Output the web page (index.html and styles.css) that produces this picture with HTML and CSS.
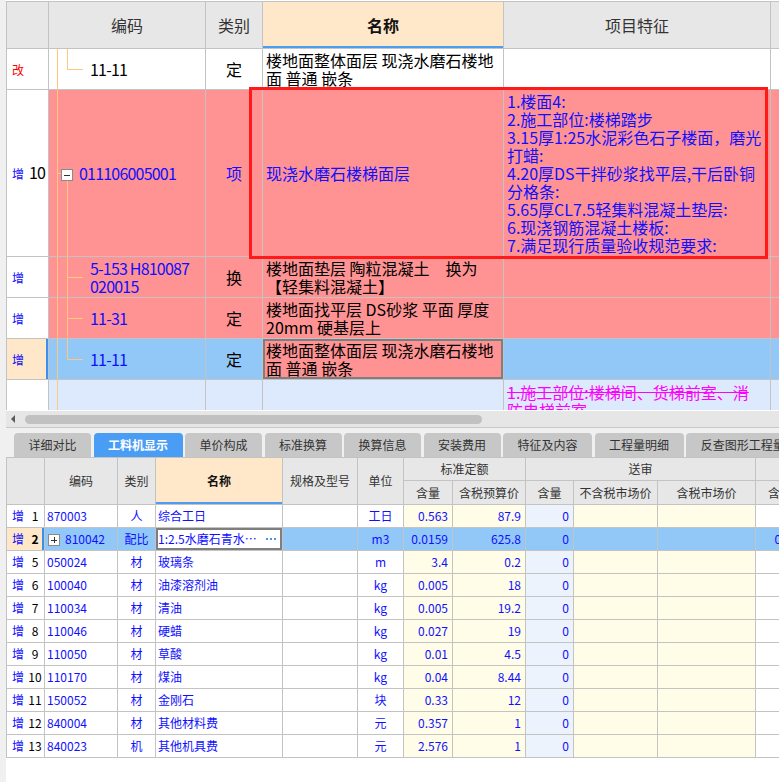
FILE: index.html
```html
<!DOCTYPE html>
<html lang="zh-CN">
<head>
<meta charset="utf-8">
<title>工料机显示</title>
<link rel="stylesheet" href="styles.css">
</head>
<body>
<div class="app">
  <div class="strip"></div>
  <div class="main">
    <div class="top">
      <table class="grid top-grid">
        <colgroup>
          <col class="w42"><col class="w157"><col class="w57"><col class="w241"><col class="w267"><col class="w60">
        </colgroup>
        <thead>
          <tr class="th47">
            <th></th><th>编码</th><th>类别</th><th class="hl">名称</th><th>项目特征</th><th></th>
          </tr>
        </thead>
        <tbody>
          <tr class="h41">
            <td class="rh"><span class="op mod">改</span></td>
            <td class="tree t-last tight">11-11</td>
            <td class="c">定</td>
            <td>楼地面整体面层 现浇水磨石楼地<br>面 普通 嵌条</td>
            <td></td><td></td>
          </tr>
          <tr class="h167 bad">
            <td class="rh"><span class="op">增</span><span class="num16">10</span></td>
            <td class="tree t-parent blue tight"><span class="tog"><svg width="12" height="12" viewBox="0 0 12 12"><rect x="0.5" y="0.5" width="11" height="11" fill="#fff" stroke="#8a8a8a"/><path d="M3 6.5h6" stroke="#333" stroke-width="1"/></svg></span>011106005001</td>
            <td class="c blue">项</td>
            <td class="blue">现浇水磨石楼梯面层</td>
            <td class="blue feat">1.楼面4:<br>2.施工部位:楼梯踏步<br>3.15厚1:25水泥彩色石子楼面，磨光<br>打蜡:<br>4.20厚DS干拌砂浆找平层,干后卧铜<br>分格条:<br>5.65厚CL7.5轻集料混凝土垫层:<br>6.现浇钢筋混凝土楼板:<br>7.满足现行质量验收规范要求:</td>
            <td></td>
          </tr>
          <tr class="h41 bad">
            <td class="rh"><span class="op">增</span></td>
            <td class="tree t-mid blue tight">5-153 H810087<br>020015</td>
            <td class="c">换</td>
            <td>楼地面垫层 陶粒混凝土　换为<br>【轻集料混凝土】</td>
            <td></td><td></td>
          </tr>
          <tr class="h41 bad">
            <td class="rh"><span class="op">增</span></td>
            <td class="tree t-mid blue tight">11-31</td>
            <td class="c">定</td>
            <td>楼地面找平层 DS砂浆 平面 厚度<br>20mm 硬基层上</td>
            <td></td><td></td>
          </tr>
          <tr class="h41 sel">
            <td class="rh cur"><span class="op">增</span></td>
            <td class="tree t-last blue tight">11-11</td>
            <td class="c">定</td>
            <td class="editing">楼地面整体面层 现浇水磨石楼地<br>面 普通 嵌条</td>
            <td></td><td></td>
          </tr>
          <tr class="h41 next">
            <td class="rh"></td>
            <td class="tree t-tail"></td>
            <td></td>
            <td></td>
            <td class="top-al strike">1.施工部位:楼梯间、货梯前室、消<br>防电梯前室</td>
            <td></td>
          </tr>
        </tbody>
      </table>
      <div class="focus"></div>
    </div>

    <div class="hscroll">
      <span class="arrow"></span>
      <span class="thumb"></span>
    </div>

    <div class="tabs">
      <div class="tab">详细对比</div>
      <div class="tab active">工料机显示</div>
      <div class="tab">单价构成</div>
      <div class="tab">标准换算</div>
      <div class="tab">换算信息</div>
      <div class="tab">安装费用</div>
      <div class="tab">特征及内容</div>
      <div class="tab">工程量明细</div>
      <div class="tab">反查图形工程量</div>
    </div>

    <div class="bottom">
      <table class="grid bot-grid">
        <colgroup>
          <col class="w38"><col class="w73"><col class="w38"><col class="w127"><col class="w75"><col class="w46"><col class="w49"><col class="w73"><col class="w48"><col class="w84"><col class="w98"><col class="w60">
        </colgroup>
        <thead>
          <tr class="bh1">
            <th rowspan="2"></th><th rowspan="2">编码</th><th rowspan="2">类别</th><th rowspan="2" class="hl">名称</th><th rowspan="2">规格及型号</th><th rowspan="2">单位</th>
            <th colspan="2">标准定额</th><th colspan="3">送审</th><th></th>
          </tr>
          <tr class="bh2">
            <th>含量</th><th>含税预算价</th><th>含量</th><th>不含税市场价</th><th>含税市场价</th><th class="lft">含量</th>
          </tr>
        </thead>
        <tbody>
          <tr>
            <td class="rh"><span class="op">增</span><span class="num">1</span></td>
            <td class="code">870003</td><td class="c">人</td><td class="nm">综合工日</td><td></td><td class="c">工日</td>
            <td class="n y">0.563</td><td class="n y">87.9</td><td class="n lb">0</td><td class="y"></td><td class="y"></td><td class="n">0.563</td>
          </tr>
          <tr class="sel">
            <td class="rh cur"><span class="op">增</span><span class="num b">2</span></td>
            <td class="code"><span class="tog2"><svg width="12" height="12" viewBox="0 0 12 12"><rect x="0.5" y="0.5" width="11" height="11" fill="#fff" stroke="#8a8a8a"/><path d="M3 6.5h6M6.5 3v6" stroke="#333" stroke-width="1"/></svg></span>810042</td>
            <td class="c">配比</td>
            <td class="nm editing"><div class="edit"><span>1:2.5水磨石青水…</span><span class="dots"><i></i><i></i><i></i></span></div></td>
            <td></td><td class="c">m3</td>
            <td class="n">0.0159</td><td class="n">625.8</td><td class="n">0</td><td></td><td></td><td class="n">0.0159</td>
          </tr>
          <tr>
            <td class="rh"><span class="op">增</span><span class="num">5</span></td>
            <td class="code">050024</td><td class="c">材</td><td class="nm">玻璃条</td><td></td><td class="c">m</td>
            <td class="n y">3.4</td><td class="n y">0.2</td><td class="n lb">0</td><td class="y"></td><td class="y"></td><td class="n">3.40</td>
          </tr>
          <tr>
            <td class="rh"><span class="op">增</span><span class="num">6</span></td>
            <td class="code">100040</td><td class="c">材</td><td class="nm">油漆溶剂油</td><td></td><td class="c">kg</td>
            <td class="n y">0.005</td><td class="n y">18</td><td class="n lb">0</td><td class="y"></td><td class="y"></td><td class="n">0.005</td>
          </tr>
          <tr>
            <td class="rh"><span class="op">增</span><span class="num">7</span></td>
            <td class="code">110034</td><td class="c">材</td><td class="nm">清油</td><td></td><td class="c">kg</td>
            <td class="n y">0.005</td><td class="n y">19.2</td><td class="n lb">0</td><td class="y"></td><td class="y"></td><td class="n">0.005</td>
          </tr>
          <tr>
            <td class="rh"><span class="op">增</span><span class="num">8</span></td>
            <td class="code">110046</td><td class="c">材</td><td class="nm">硬蜡</td><td></td><td class="c">kg</td>
            <td class="n y">0.027</td><td class="n y">19</td><td class="n lb">0</td><td class="y"></td><td class="y"></td><td class="n">0.027</td>
          </tr>
          <tr>
            <td class="rh"><span class="op">增</span><span class="num">9</span></td>
            <td class="code">110050</td><td class="c">材</td><td class="nm">草酸</td><td></td><td class="c">kg</td>
            <td class="n y">0.01</td><td class="n y">4.5</td><td class="n lb">0</td><td class="y"></td><td class="y"></td><td class="n">0.01</td>
          </tr>
          <tr>
            <td class="rh"><span class="op">增</span><span class="num">10</span></td>
            <td class="code">110170</td><td class="c">材</td><td class="nm">煤油</td><td></td><td class="c">kg</td>
            <td class="n y">0.04</td><td class="n y">8.44</td><td class="n lb">0</td><td class="y"></td><td class="y"></td><td class="n">0.04</td>
          </tr>
          <tr>
            <td class="rh"><span class="op">增</span><span class="num">11</span></td>
            <td class="code">150052</td><td class="c">材</td><td class="nm">金刚石</td><td></td><td class="c">块</td>
            <td class="n y">0.33</td><td class="n y">12</td><td class="n lb">0</td><td class="y"></td><td class="y"></td><td class="n">0.33</td>
          </tr>
          <tr>
            <td class="rh"><span class="op">增</span><span class="num">12</span></td>
            <td class="code">840004</td><td class="c">材</td><td class="nm">其他材料费</td><td></td><td class="c">元</td>
            <td class="n y">0.357</td><td class="n y">1</td><td class="n lb">0</td><td class="y"></td><td class="y"></td><td class="n b">0.357</td>
          </tr>
          <tr>
            <td class="rh"><span class="op">增</span><span class="num">13</span></td>
            <td class="code">840023</td><td class="c">机</td><td class="nm">其他机具费</td><td></td><td class="c">元</td>
            <td class="n y">2.576</td><td class="n y">1</td><td class="n lb">0</td><td class="y"></td><td class="y"></td><td class="n b">2.576</td>
          </tr>
        </tbody>
      </table>
    </div>
  </div>
</div>
</body>
</html>
```

FILE: styles.css
```css
* { box-sizing: border-box; }
html, body { margin: 0; padding: 0; }
body {
  width: 779px;
  height: 782px;
  overflow: hidden;
  background: #fff;
  font-family: "Noto Sans CJK SC", "Liberation Sans", sans-serif;
  color: #000;
}
.app { display: flex; height: 782px; }
.strip { width: 6px; flex: none; background: #f0f0f0; }
.main { flex: 1; min-width: 0; overflow: hidden; display: flex; flex-direction: column; }

/* ---------- grids ---------- */
.grid { border-collapse: collapse; table-layout: fixed; }
.grid th, .grid td {
  border: 1px solid #c3c3c3;
  padding: 0 3px;
  white-space: nowrap;
  overflow: hidden;
  vertical-align: middle;
  text-align: left;
}
.grid th { background: #e7e7e7; font-weight: normal; color: #333; text-align: center; }
.grid th.hl { background: #ffe8c9; color: #111; font-weight: bold; box-shadow: inset 0 -2px 0 #4a9ef2; }

.w42 { width: 42px; } .w157 { width: 157px; } .w57 { width: 57px; } .w241 { width: 241px; }
.w267 { width: 267px; } .w60 { width: 60px; } .w38 { width: 38px; } .w73 { width: 73px; }
.w127 { width: 127px; } .w75 { width: 75px; } .w46 { width: 46px; } .w49 { width: 49px; }
.w48 { width: 48px; } .w84 { width: 84px; } .w98 { width: 98px; }

.c { text-align: center !important; }
.blue { color: #1010ff; }
.b { font-weight: bold; }
.tight { letter-spacing: -0.8px; }

/* ---------- top grid ---------- */
.top { position: relative; height: 410px; overflow: hidden; flex: none; padding-top: 1px; }
.top-grid { width: 824px; font-size: 16px; line-height: 18px; }
.top-grid .th47 { height: 47px; }
.top-grid .h41 { height: 41px; }
.top-grid .h167 { height: 167px; }
.top-grid .rh { padding-left: 5px; background: #fff; }
.op { font-size: 12px; color: #1010ff; }
.op.mod { color: #ff0000; }
.num16 { font-size: 16px; margin-left: 5px; color: #000; letter-spacing: -0.8px; }

.bad td:not(.rh) { background-color: #ff9292; }
.sel td:not(.rh) { background-color: #92c8f7; }
.next td:not(.rh) { background-color: #dde9fc; }
.grid .rh.cur { background: #ffe8c9; box-shadow: inset -2px 0 0 #3d8fef; }

.grid td.editing { background-color: #ff9292; box-shadow: inset 0 0 0 2px #7e7e7e; }

.feat { vertical-align: middle; }
.top-al { vertical-align: top !important; padding-top: 3px !important; }
.strike { color: #ff00ff; text-decoration: line-through; }

/* tree connectors */
.tree {
  padding-left: 41px !important;
  background-repeat: no-repeat;
}
.t-mid {
  background-image: linear-gradient(#ffc87e, #ffc87e), linear-gradient(#ffc87e, #ffc87e), linear-gradient(#ffc87e, #ffc87e);
  background-position: 8px 0, 18px 0, 18px 50%;
  background-size: 1px 100%, 1px 100%, 16px 1px;
}
.t-last {
  background-image: linear-gradient(#ffc87e, #ffc87e), linear-gradient(#ffc87e, #ffc87e), linear-gradient(#ffc87e, #ffc87e);
  background-position: 8px 0, 18px 0, 18px 50%;
  background-size: 1px 100%, 1px 50%, 16px 1px;
}
.t-parent {
  padding-left: 12px !important;
  background-image: linear-gradient(#ffc87e, #ffc87e), linear-gradient(#ffc87e, #ffc87e), linear-gradient(#ffc87e, #ffc87e);
  background-position: 8px 0, 8px 50%, 18px 100%;
  background-size: 1px 100%, 4px 1px, 1px calc(50% - 6px);
}
.t-tail {
  background-image: linear-gradient(#ffc87e, #ffc87e);
  background-position: 8px 0;
  background-size: 1px 100%;
}
.tog { display: inline-block; width: 12px; height: 12px; margin-right: 6px; vertical-align: -1px; }
.tog svg, .tog2 svg { display: block; }

.focus {
  position: absolute;
  left: 243px;
  top: 87px;
  width: 519px;
  height: 172px;
  border: 3px solid #ff1a1a;
}

/* ---------- scrollbar ---------- */
.hscroll {
  flex: none;
  height: 17px;
  background: #e6e6e6;
  border-top: 1px solid #fff;
  display: flex;
  align-items: center;
  padding-left: 5px;
}
.arrow {
  width: 0; height: 0;
  border-right: 4px solid #5a5a5a;
  border-top: 4px solid transparent;
  border-bottom: 4px solid transparent;
}
.thumb {
  margin-left: 10px;
  width: 457px;
  height: 9px;
  border-radius: 5px;
  background: #c1c1c1;
}

/* ---------- tabs ---------- */
.tabs {
  flex: none;
  display: flex;
  gap: 2.5px;
  height: 30px;
  padding: 5px 0 0 8px;
  background: #f0f0f0;
  border-top: 1px solid #c8c8c8;
}
.tab {
  flex: none;
  height: 24px;
  padding: 0 14.5px;
  background: #c7c7c7;
  border-radius: 4px 4px 0 0;
  font-size: 12px;
  line-height: 24px;
  color: #333;
  white-space: nowrap;
}
.tab.active { background: #4a9df5; color: #fff; font-weight: bold; }

/* ---------- bottom grid ---------- */
.bottom { flex: 1; overflow: hidden; }
.bot-grid { width: 809px; font-size: 12px; line-height: 16px; }
.bot-grid .bh1 { height: 23px; }
.bot-grid .bh2 { height: 24px; }
.bot-grid th.lft { text-align: left; padding-left: 12px; }
.bot-grid tbody tr { height: 23px; }
.bot-grid td { color: #1010ff; }
.bot-grid .rh { padding-left: 5px; }
.bot-grid .num { display: inline-block; width: 14px; margin-left: 4px; text-align: center; color: #000; }
.bot-grid .code { padding-left: 2px; }
.bot-grid .nm { padding-left: 2px; }
.bot-grid .n { text-align: right; padding-right: 4px; }
.bot-grid .y { background: #fffde8; }
.bot-grid .lb { background: #ecf3fd; }
.bot-grid td.editing { background-color: #fff; box-shadow: inset 0 0 0 2px #7e7e7e; }
.tog2 { display: inline-block; width: 12px; height: 12px; margin: 0 5px 0 1px; vertical-align: -2px; }
.edit { display: flex; justify-content: space-between; align-items: center; padding-right: 3px; }
.dots { display: flex; gap: 2px; align-items: center; }
.dots i { display: block; width: 2px; height: 2px; background: #4d93e0; }
```
